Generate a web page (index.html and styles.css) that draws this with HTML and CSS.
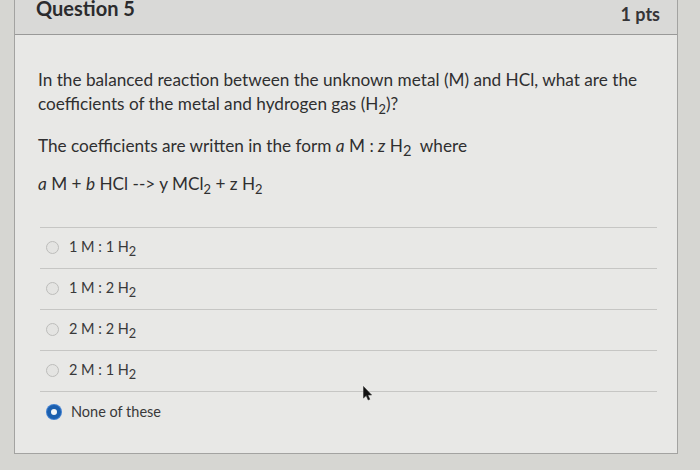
FILE: index.html
```html
<!DOCTYPE html>
<html>
<head>
<meta charset="utf-8">
<link rel="stylesheet" href="styles.css">
</head>
<body>
<div class="card">
  <div class="card-header">
    <h2 class="title">Question 5</h2>
    <span class="pts">1 pts</span>
  </div>
  <div class="card-body">
    <p class="q q1">In the balanced reaction between the unknown metal (M) and HCl, what are the coefficients of the metal and hydrogen gas (H<sub>2</sub>)?</p>
    <p class="q q2">The coefficients are written in the form <i>a</i> M : <i>z</i> H<sub>2</sub>&nbsp; where</p>
    <p class="q q3"><i>a</i> M + <i>b</i> HCl --&gt; y MCl<sub>2</sub> + z H<sub>2</sub></p>
    <div class="answers">
      <div class="answer"><span class="radio"></span><span class="label">1 M : 1 H<sub>2</sub></span></div>
      <div class="answer"><span class="radio"></span><span class="label">1 M : 2 H<sub>2</sub></span></div>
      <div class="answer"><span class="radio"></span><span class="label">2 M : 2 H<sub>2</sub></span></div>
      <div class="answer"><span class="radio"></span><span class="label">2 M : 1 H<sub>2</sub></span></div>
      <div class="answer answer-last"><span class="radio radio-on"></span><span class="label">None of these</span></div>
    </div>
  </div>
  <svg class="cursor" width="10" height="15" viewBox="0 0 10 15"><path d="M0.5 0.5 L0.5 12 L3.2 9.6 L5.2 14 L6.8 13.3 L4.9 9 L8.6 9 Z" fill="#111" stroke="#333" stroke-width="0.6"/></svg>
</div>
</body>
</html>
```

FILE: styles.css
```css
html, body {
  margin: 0;
  padding: 0;
}
body {
  background: #d6d6d2;
  font-family: Lato, "Open Sans", sans-serif;
  color: #2e2e2e;
  width: 700px;
  height: 470px;
  overflow: hidden;
}
.card {
  position: relative;
  margin: -5px 22px 0 14px;
  border: 1px solid #a3a3a1;
  background: #e8e8e6;
}
.card-header {
  box-sizing: border-box;
  height: 39px;
  display: flex;
  justify-content: space-between;
  align-items: flex-start;
  padding: 0 17px 0 21px;
  background: #d9d9d7;
  border-bottom: 1px solid #999998;
}
.title {
  margin: 0;
  font-size: 20px;
  line-height: 24px;
  font-weight: 700;
  color: #2b2b2d;
}
.pts {
  margin-top: 7px;
  font-size: 18px;
  line-height: 22px;
  font-weight: 700;
  color: #353537;
}
.card-body {
  padding: 33px 20px 21px 23px;
}
.q {
  margin: 0;
  font-size: 17.2px;
  line-height: 24px;
  color: #2f2f30;
}
.q sub {
  font-size: 0.75em;
  line-height: 0;
  vertical-align: -0.3em;
}
.q2 sub {
  font-size: 0.85em;
}
.q2 {
  margin-top: 18px;
}
.q3 {
  margin-top: 14px;
}
.answers {
  margin-top: 31px;
  margin-left: 2px;
}
.answer {
  box-sizing: border-box;
  height: 41px;
  display: flex;
  align-items: center;
  border-top: 1px solid #c6c6c4;
  padding-bottom: 2px;
}
.answer-last {
  padding-bottom: 0;
}
.radio {
  box-sizing: border-box;
  width: 13px;
  height: 13px;
  border-radius: 50%;
  border: 1px solid #bdbdbb;
  background: #e4e4e2;
  margin-left: 6px;
  margin-right: 10px;
  flex: none;
}
.radio-on {
  width: 14px;
  height: 14px;
  border: 4.5px solid #1b5fae;
  background: #f4f6f8;
  margin-left: 7px;
  margin-right: 10px;
  box-shadow: 0 0 0 1px #3f7fd0;
}
.label {
  font-size: 14.5px;
  line-height: 20px;
  color: #39393a;
}
.label sub {
  font-size: 0.88em;
  line-height: 0;
  vertical-align: -0.28em;
}
.cursor {
  position: absolute;
  left: 348px;
  top: 390px;
}
```
